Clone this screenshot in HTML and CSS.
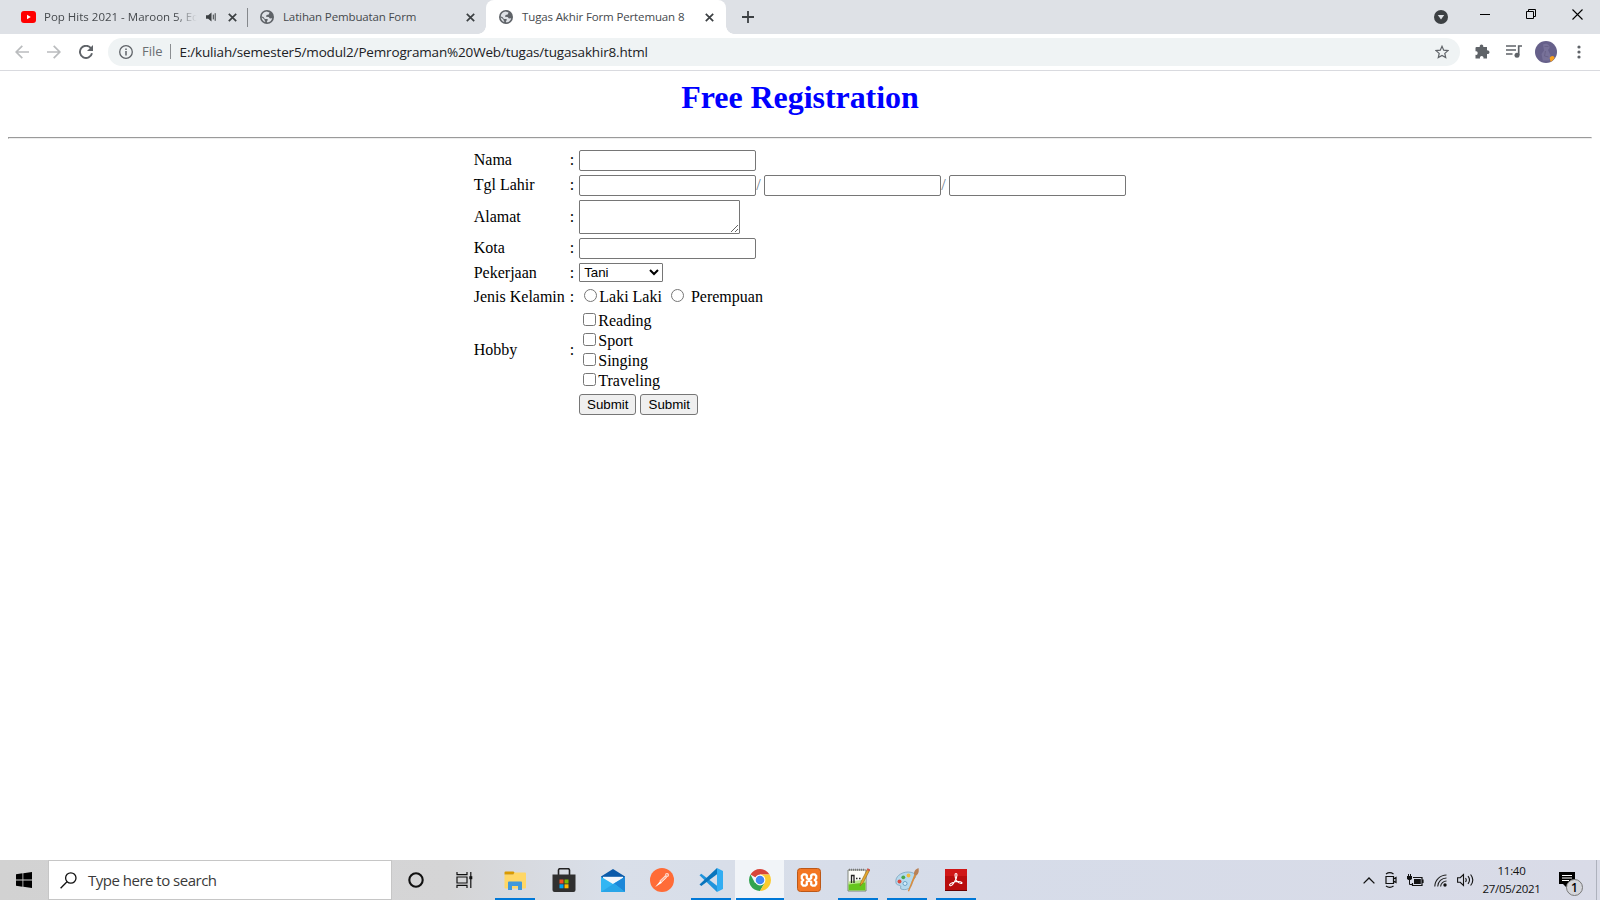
FILE: index.html
```html
<!DOCTYPE html>
<html lang="id">
<head>
<meta charset="utf-8">
<title>Tugas Akhir Form Pertemuan 8</title>
<link rel="stylesheet" href="styles.css">
</head>
<body>
<svg class="defs" width="0" height="0">
  <symbol id="globe" viewBox="0 0 14 14"><circle cx="7" cy="7" r="7" fill="#5f6368"/><path d="M6.6 1.6 9.6 2.6 8.7 4.4 6.6 4.9 6 6.7 8.7 6.9 9.9 8.6 12.2 8.3C11.8 10.6 9.8 12.4 7.4 12.4L6.8 11 8.1 9.9 7.2 9 4.9 8.9 3.4 6.9 1.7 6.5C1.9 4 4 1.8 6.6 1.6Z" fill="#dee1e6"/><path d="M1.6 7.2 4.2 9.2 5.4 12.1C3.2 11.5 1.7 9.6 1.6 7.2Z" fill="#dee1e6"/></symbol>
  <symbol id="close" viewBox="0 0 9 9"><path d="M.8.8 8.2 8.2M8.2.8.8 8.2" stroke="#3c4043" stroke-width="1.7"/></symbol>
</svg>
<header class="tabs">
  <div class="tab tab-one">
    <svg width="15" height="12" viewBox="0 0 15 12"><rect width="15" height="12" rx="3" fill="#f00"/><path d="M6 3.7v4.6L9.8 6Z" fill="#fff"/></svg>
    <span class="tab-title fade">Pop Hits 2021 - Maroon 5, Ed</span>
    <svg class="audio" width="11" height="10" viewBox="0 0 11 10"><path d="M0 3.3h2.2L5.5.6v8.8L2.2 6.7H0Z" fill="#3c4043"/><path d="M7.3 2.6v4.8M9.2 1.2v7.6" stroke="#3c4043" stroke-width="1"/></svg>
    <svg class="x" width="9" height="9"><use href="#close"/></svg>
  </div>
  <div class="tab tab-two">
    <svg width="14" height="14"><use href="#globe"/></svg>
    <span class="tab-title">Latihan Pembuatan Form</span>
    <svg class="x" width="9" height="9"><use href="#close"/></svg>
  </div>
  <div class="tab tab-active">
    <svg width="14" height="14"><use href="#globe"/></svg>
    <span class="tab-title">Tugas Akhir Form Pertemuan 8</span>
    <svg class="x" width="9" height="9"><use href="#close"/></svg>
  </div>
  <svg class="plus" width="12" height="12" viewBox="0 0 12 12"><path d="M6 0v12M0 6h12" stroke="#3c4043" stroke-width="1.8"/></svg>
  <div class="window-buttons">
    <svg width="14" height="14" viewBox="0 0 14 14"><circle cx="7" cy="7" r="7" fill="#3c4043"/><path d="M3.8 5h6.4L7 9.4Z" fill="#dee1e6"/></svg>
    <svg width="10" height="10" viewBox="0 0 10 10"><path d="M0 5.5h10" stroke="#000"/></svg>
    <svg width="10" height="10" viewBox="0 0 10 10" fill="none" stroke="#000"><path d="M.5 2.5h7v7h-7ZM2.5 2.5v-2h7v7h-2"/></svg>
    <svg width="11" height="11" viewBox="0 0 11 11"><path d="M.5.5l10 10M10.5.5l-10 10" stroke="#000" stroke-width="1.1"/></svg>
  </div>
</header>
<nav class="toolbar">
  <svg width="14" height="14" viewBox="0 0 14 14" fill="none" stroke="#babcbe" stroke-width="1.7"><path d="M14 7H1.5M7.3.8 1.2 7l6.1 6.2"/></svg>
  <svg width="14" height="14" viewBox="0 0 14 14" fill="none" stroke="#babcbe" stroke-width="1.7"><path d="M0 7h12.5M6.7.8 12.8 7l-6.1 6.2"/></svg>
  <svg width="14" height="14" viewBox="0 0 14 14"><path d="M12 3.3A6.1 6.1 0 1 0 13 8.3" fill="none" stroke="#5f6368" stroke-width="1.9"/><path d="M14 0v6H8Z" fill="#5f6368"/></svg>
  <div class="address">
    <svg width="14" height="14" viewBox="0 0 14 14"><circle cx="7" cy="7" r="6.3" fill="none" stroke="#5f6368" stroke-width="1.3"/><path d="M7 6v4.5M7 3.4v1.5" stroke="#5f6368" stroke-width="1.5"/></svg>
    <span class="scheme">File</span>
    <span class="url">E:/kuliah/semester5/modul2/Pemrograman%20Web/tugas/tugasakhir8.html</span>
    <svg class="star" width="14" height="14" viewBox="0 0 14 14"><path d="m7 1.3 1.7 3.9 4.3.4-3.2 2.8.9 4.2L7 10.4l-3.7 2.2.9-4.2L1 5.6l4.3-.4Z" fill="none" stroke="#5f6368" stroke-width="1.2"/></svg>
  </div>
  <svg class="puzzle" width="15" height="15" viewBox="0 0 15 15"><path d="M1.5 3H4.8a1.8 1.8 0 1 1 3.4 0H12V6.4a1.9 1.9 0 1 1 0 3.6v4.5H8.4a1.8 1.8 0 1 0-3.4 0H.5V10.8a1.8 1.8 0 1 0 0-3.5V4a1 1 0 0 1 1-1Z" fill="#5f6368"/></svg>
  <svg class="queue" width="16" height="13" viewBox="0 0 16 13"><path d="M0 1h10M0 5h10M0 9h6.5M12.7 10V1H16" fill="none" stroke="#5f6368" stroke-width="1.7"/><circle cx="11" cy="10.3" r="2.5" fill="#5f6368"/></svg>
  <svg class="avatar" width="22" height="22" viewBox="0 0 22 22"><circle cx="11" cy="11" r="11" fill="#66608a"/><path d="M8 3.5c3-2 7 0 6.6 3.5L13 9l2.5 5-1 5.5H7.8L6.5 13 9 9.5Z" fill="#777199"/><path d="M9.500 5.500h4M10.500 10l-1 5 4 1" fill="none" stroke="#696288"/><path d="M15 18.500a2.500 2.500 0 0 1 4.700-1.800 11 11 0 0 1-4 4.200Z" fill="#f9a01b"/></svg>
  <svg class="menu" width="4" height="14" viewBox="0 0 4 14" fill="#5f6368"><circle cx="2" cy="2" r="1.6"/><circle cx="2" cy="7" r="1.6"/><circle cx="2" cy="12" r="1.6"/></svg>
</nav>
<main class="page">
  <h1>Free Registration</h1>
  <hr>
  <form>
  <table>
    <tr class="raised"><td>Nama</td><td>:</td><td class="fields"><input class="text" type="text"></td></tr>
    <tr class="raised"><td>Tgl Lahir</td><td>:</td><td class="fields"><input class="text" type="text"><i>/</i><input class="text" type="text"><i>/</i><input class="text" type="text"></td></tr>
    <tr><td>Alamat</td><td>:</td><td class="fields"><textarea></textarea></td></tr>
    <tr class="raised"><td>Kota</td><td>:</td><td class="fields"><input class="text" type="text"></td></tr>
    <tr><td>Pekerjaan</td><td>:</td><td class="fields"><select><option>Tani</option></select></td></tr>
    <tr class="lowered"><td>Jenis Kelamin</td><td>:</td><td class="choices"><div><input type="radio" name="jk">Laki Laki <input type="radio" name="jk"> Perempuan</div></td></tr>
    <tr><td>Hobby</td><td>:</td><td class="choices"><div><input type="checkbox">Reading</div><div><input type="checkbox">Sport</div><div><input type="checkbox">Singing</div><div><input type="checkbox">Traveling</div></td></tr>
    <tr><td></td><td></td><td class="fields buttons"><button type="button">Submit</button><button type="button">Submit</button></td></tr>
  </table>
  </form>
</main>
<footer class="taskbar">
  <div class="start"><svg width="16" height="16" viewBox="0 0 16 16"><path d="M0 2.2 6.5 1.3V7.6H0ZM7.3 1.2 16 0V7.6H7.3ZM0 8.4H6.5v6.3L0 13.8ZM7.3 8.4H16V16L7.3 14.8Z"/></svg></div>
  <div class="search">
    <svg width="17" height="17" viewBox="0 0 17 17" fill="none" stroke="#111" stroke-width="1.3"><circle cx="10.8" cy="6" r="5.2"/><path d="M7 9.8.6 16.2"/></svg>
    <span>Type here to search</span>
  </div>
  <div class="apps">
    <div class="app cortana"><svg width="16" height="16" viewBox="0 0 16 16"><circle cx="8" cy="8" r="6.7" fill="none" stroke="#111" stroke-width="2.1"/></svg></div>
    <div class="app taskview"><svg width="17" height="16" viewBox="0 0 17 16" fill="none" stroke="#111" stroke-width="1.2"><path d="M1 0v2.7h10V0M1 16v-2.7h10V16M1 5h10v6H1ZM14.8 0v16"/><path d="M13.3 4.2h3v3h-3Z" fill="#111" stroke="none"/></svg></div>
    <div class="app run"><svg width="22" height="19" viewBox="0 0 22 19"><path d="M.5 3.500V16.500a1 1 0 0 0 1 1H21a1 1 0 0 0 1-1V2.500a1 1 0 0 0-1-1H10.500L9 3.500Z" fill="#ffd766"/><path d="M.5 1.500A1 1 0 0 1 1.500.5H9.500L10.500 1.500 9.300 3.500H.5Z" fill="#d99a00"/><path d="M4 19v-7.600a1 1 0 0 1 1-1H17a1 1 0 0 1 1 1V19h-4v-4H8v4Z" fill="#3f98dc"/></svg></div>
    <div class="app"><svg width="24" height="24" viewBox="0 0 24 24"><path d="M6.5 7V2a1.5 1.5 0 0 1 1.500-1.300h8A1.500 1.500 0 0 1 17.500 2v5" fill="none" stroke="#222" stroke-width="1.6"/><path d="M.5 6.500h23V22a2 2 0 0 1-2 2h-19a2 2 0 0 1-2-2Z" fill="#303030"/><path d="M7.500 11.500h4v4h-4Z" fill="#f25022"/><path d="M12.500 11.500h4v4h-4Z" fill="#7fba00"/><path d="M7.500 16.300h4v4h-4Z" fill="#00a4ef"/><path d="M12.500 16.300h4v4h-4Z" fill="#ffb900"/></svg></div>
    <div class="app"><svg width="24" height="23" viewBox="0 0 24 23"><path d="M0 7.600 12 0l12 7.600V12H0Z" fill="#0b5aa9"/><path d="M2 7.800h20v8H2Z" fill="#f4f7fb"/><path d="M0 7.700 12 15 24 7.700V23H0Z" fill="#32b6f3"/><path d="M24 7.700V23L13 14.400Z" fill="#1d87d8"/><path d="M0 23h24L13 14.400Z" fill="#28a5e8"/></svg></div>
    <div class="app"><svg width="24" height="24" viewBox="0 0 24 24"><circle cx="12" cy="12" r="12" fill="#ff6c37"/><path d="M5.200 19 10 13.200l2 1.600Z" fill="#fff"/><path d="m9.800 12.900 5.200-5 1.600 1.700-5.200 4.800Z" fill="#ffb89a" stroke="#fff" stroke-width=".7"/><circle cx="17" cy="6.900" r="2" fill="#ffe1d4"/><path d="m15.900 6.800 2 .3" stroke="#ff6c37"/></svg></div>
    <div class="app run"><svg width="24" height="24" viewBox="0 0 24 24"><path d="m.5 7.200 1.800-1.400L18 17.800V24Z" fill="#2094dc"/><path d="m.5 16.600 1.800 1.500L18 6.200V0Z" fill="#0875bd"/><path d="M18 0v24l6-3V3Z" fill="#32adf2"/></svg></div>
    <div class="app run current"><svg width="22" height="22" viewBox="0 0 22 22"><path d="M11 11 1.500 5.500A11 11 0 0 1 20.500 5.500H11Z" fill="#d8453b"/><path d="M11 11 6 14 1.500 5.500A11 11 0 0 0 11 22l4.800-8.300Z" fill="#32a350"/><path d="M11 5.500h9.500A11 11 0 0 1 11 22l4.800-8.300Z" fill="#fccb2e"/><circle cx="11" cy="11" r="5.400" fill="#fff"/><circle cx="11" cy="11" r="4.300" fill="#4286f4"/></svg></div>
    <div class="app"><svg width="24" height="24" viewBox="0 0 24 24"><rect x=".5" y=".5" width="23" height="23" rx="3" fill="#f37623" stroke="#bc5817"/><path d="M9.800 10.300V7.300L8.500 6.300H6.300L4.800 8V10.500L6.300 12 4.800 13.500V16L6.300 17.700H8.500L9.800 16.700V13.700L12 12.500 14.200 13.700V16.700L15.500 17.700H17.700L19.200 16V13.500L17.700 12 19.200 10.500V8L17.700 6.300H15.500L14.200 7.300V10.300L12 11.500Z" fill="none" stroke="#fff" stroke-width="2.300" stroke-linejoin="round"/></svg></div>
    <div class="app run"><svg width="24" height="24" viewBox="0 0 24 24"><path d="M2 2h18v21H2Z" fill="#fbfcf8" stroke="#68705f" stroke-width=".8"/><path d="M2.500 15.500c6-1.500 11-1 17-2v9h-17Z" fill="#65c61e"/><path d="M2.500 13.500c6-1 11-1 17-2v3l-17 2Z" fill="#b8e58c"/><path d="M3 1.800h16" stroke="#777" stroke-width="2" stroke-dasharray="1 1"/><path d="M5.500 15V7.500h2.500V15M10 10.500h1.500M13 10.500h1.500" fill="none" stroke="#222" stroke-width="1.300"/><path d="m14 18 1-4.200L21.600.8l2.200 1.100L17 15Z" fill="#e5a92c" stroke="#8b6325" stroke-width=".6"/><path d="m20.900 2.100.8-1.600 2.300 1-.8 1.700Z" fill="#d85050"/></svg></div>
    <div class="app run"><svg width="24" height="24" viewBox="0 0 24 24"><path d="M1 15C-.5 9 6 4 13 4c6 0 9 3 7 6-2 2-3 2-3 5 0 5-6 8-11 6-1.500-1 1-3-1-3.500C3.500 17 1.500 17 1 15Z" fill="#b5d9ed" stroke="#719cb8" stroke-width=".7"/><circle cx="4.500" cy="13.500" r="2" fill="#d94b40"/><circle cx="8.300" cy="9.300" r="1.900" fill="#48a84b"/><circle cx="13.500" cy="7.500" r="1.900" fill="#f2bc3d"/><circle cx="10" cy="15.500" r="2" fill="#d5edfa" stroke="#5995bd" stroke-width=".8"/><path d="m12.800 23 6.700-17 1.800 1L14 23.500Z" fill="#d98d40"/><path d="M19 6.500C18.500 3 21 1 23.500 0c.5 3 .5 5-2 7.500Z" fill="#b98156"/></svg></div>
    <div class="app run"><svg width="22" height="22" viewBox="0 0 22 22"><path d="M0 0h22v21H0Z" fill="#b90d0d"/><path d="M0 0h22v7H0Z" fill="#d01717"/><path d="M0 21h22v1H0Z" fill="#600"/><path d="M5 16.500c-2-1.500 4-4 8-4 4 0 5 2 3 2-3.500 0-6-4.500-6-8.500 0-2 2-2 2 0 0 4-5 12-7 10.500Z" fill="none" stroke="#fff" stroke-width="1.100"/></svg></div>
  </div>
  <div class="tray">
    <svg width="12" height="7" viewBox="0 0 12 7"><path d="m.6 6.400 5.400-5.400 5.400 5.400" fill="none" stroke="#111" stroke-width="1.300"/></svg>
    <svg width="12" height="16" viewBox="0 0 12 16" fill="none" stroke="#111" stroke-width="1.200"><path d="M1 2Q4.700-.6 8.500 2M1 14q3.700 2.600 7.500 0M1 4.500h7.500v7H1ZM8.500 7l2.500-1.500v5L8.500 9"/></svg>
    <svg width="17" height="13" viewBox="0 0 17 13"><path d="M6 3.500h9v8H5.500V9M15.500 6H16v3" fill="none" stroke="#111" stroke-width="1.200"/><path d="M7 5h6.800v5H7ZM0 2h5v3L3.500 6h-2L0 5Z" fill="#111"/><path d="M1.500 0v2M3.500 0v2M2.500 6v4.500h3" fill="none" stroke="#111"/></svg>
    <svg width="13" height="13" viewBox="0 0 13 13" fill="none" stroke="#222" stroke-width="1.100"><path d="M.8 12.500A11.700 11.700 0 0 1 12.500 1M3.700 12.500a8.800 8.800 0 0 1 8.800-8.500M6.600 12.500A5.900 5.900 0 0 1 12.500 7"/><circle cx="11" cy="11" r="1.700" fill="#111" stroke="none"/></svg>
    <svg width="17" height="14" viewBox="0 0 17 14" fill="none" stroke="#111" stroke-width="1.100"><path d="M.6 4.700h2.600L6.500 1.500v11L3.200 9.300H.6ZM8.500 5q1.500 2 0 4M11 3.200q3 3.800 0 7.600M13.600 1.500q4.400 5.500 0 11"/></svg>
  </div>
  <div class="clock"><span>11:40</span><span>27/05/2021</span></div>
  <div class="notice"><svg width="16" height="16" viewBox="0 0 16 16"><path d="M0 0h16v12H8v4l-4-4H0Z"/><path d="M3 3.500h10M3 6h10M3 8.500h7" stroke="#fff"/></svg><b>1</b></div>
</footer>
</body>
</html>
```
FILE: styles.css
```css
* { box-sizing: border-box; }
body { margin: 0; width: 1600px; height: 900px; overflow: hidden; display: flex; flex-direction: column; background: #fff; font-family: "Liberation Serif", serif; }
svg { display: block; flex: none; }
.defs { position: absolute; }

.tabs { height: 34px; flex: none; display: flex; align-items: center; background: #dee1e6; font: 12px "Open Sans", sans-serif; color: #45494d; }
.tab { display: flex; align-items: center; height: 34px; white-space: nowrap; }
.tab-one { width: 248px; padding-left: 21px; border-right: 1px solid transparent; background: linear-gradient(#85888c, #85888c) 247px 8px / 1px 19px no-repeat border-box; }
.tab-two { width: 238px; padding-left: 12px; }
.tab-active { position: relative; width: 240px; padding-left: 13px; background: #fff; border-radius: 8px 8px 0 0; }
.tab-active::before, .tab-active::after { content: ""; position: absolute; bottom: 0; width: 8px; height: 8px; }
.tab-active::before { left: -8px; background: radial-gradient(circle at 0 0, #dee1e6 7.5px, #fff 8px); }
.tab-active::after { right: -8px; background: radial-gradient(circle at 100% 0, #dee1e6 7.5px, #fff 8px); }
.tab-title { margin-left: 9px; flex: 1; font-size: 11.5px; letter-spacing: -.13px; padding-bottom: 2px; }
.tab-one .tab-title { margin-left: 8px; flex: none; width: 153px; letter-spacing: 0; }
.fade { -webkit-mask-image: linear-gradient(90deg, #000 132px, transparent 153px); mask-image: linear-gradient(90deg, #000 132px, transparent 153px); }
.audio { margin-left: 9px; }
.tab .x { margin-left: auto; margin-right: 10px; }
.tab-two .x { margin-right: 11px; }
.tab-active .x { margin-right: 12px; }
.plus { margin-left: 16px; }
.window-buttons { margin-left: auto; height: 34px; display: flex; padding: 10px 17px 0 0; }
.window-buttons svg:nth-child(2) { margin: -1px 0 0 32px; }
.window-buttons svg:nth-child(3) { margin: -1px 0 0 36px; }
.window-buttons svg:nth-child(4) { margin: -1px 0 0 36px; }

.toolbar { height: 37px; flex: none; display: flex; align-items: center; padding: 0 19px 1px 15px; border-bottom: 1px solid #d9dadf; gap: 18px; font: 13px "Open Sans", sans-serif; }
.address { display: flex; align-items: center; width: 1352px; height: 28px; margin-left: -3px; padding: 0 11px; border-radius: 14px; background: #eff3f4; }
.scheme { margin-left: 9px; padding-right: 7px; line-height: 15px; border-right: 1px solid #8b8e91; color: #6a6e72; }
.url { margin-left: 9px; font-size: 13.5px; letter-spacing: -.165px; color: #202124; }
.star { margin-left: auto; }
.puzzle { margin-left: -3px; }
.queue { margin-left: -2px; }
.avatar { margin-left: -5px; }
.menu { margin-left: 2px; }

.page { flex: 1; padding: 8px; font-size: 16px; color: #000; }
h1 { margin: 0 0 21px; font-size: 32px; line-height: 37px; letter-spacing: -.06px; text-align: center; color: #00f; }
hr { margin: 0 0 8px; border: 1px solid; border-color: #9a9a9a #eee #eee #9a9a9a; }
table { margin: 0 auto; border-spacing: 2px; }
td { padding: 1px; line-height: 18px; vertical-align: middle; white-space: nowrap; }
td:first-child, td:nth-child(2) { padding-right: 2px; }
.raised td:not(.fields) { padding-top: 0; padding-bottom: 2px; }
.lowered td:not(.choices) { padding-top: 2px; padding-bottom: 0; }
.fields > * { vertical-align: top; }
.fields { font-size: 0; }
.fields i { display: inline-block; width: 8px; font-size: 16px; font-style: normal; line-height: 19px; color: #6c7b8c; }
.text { width: 177px; height: 21px; margin: 0; border: 1px solid #767676; border-radius: 2px; }
textarea { display: block; width: 161px; height: 34px; margin: 0; border: 1px solid #767676; border-radius: 1px; }
select { display: block; width: 84px; height: 19px; margin: 0; padding: 0; border: 1px solid #767676; border-radius: 1px; background: #fff; font: 13.333px "Liberation Sans", sans-serif; letter-spacing: -.1px; color: #000; }
.choices div { height: 20px; line-height: 22px; }
.choices input { width: 13px; height: 13px; vertical-align: top; margin: 3px 2px 0 4px; }
.choices input[type="radio"] { margin-left: 5px; }
.choices input + input { margin-right: 3px; }
button { width: 57px; height: 21px; padding: 0; border: 1px solid #767676; border-radius: 3px; background: #efefef; font: 13.333px "Liberation Sans", sans-serif; color: #000; }
button + button { width: 58px; margin-left: 4px; }

.taskbar { height: 40px; flex: none; display: flex; background: linear-gradient(90deg, #d2d2d2, #d5d5d6 28%, #d9dfe9 38%, #d6dce9 60%, #d9dbe7); font-family: "Open Sans", sans-serif; }
.start { width: 48px; display: flex; padding: 12px 0 0 16px; }
.search { width: 344px; display: flex; align-items: center; padding-left: 11px; gap: 11px; border: 1px solid #c6c6c6; background: #fff; font-size: 15px; letter-spacing: -.5px; color: #3a3a3a; }
.apps { display: flex; }
.app { width: 49px; display: flex; align-items: center; justify-content: center; }
.cortana { width: 48px; }
.taskview { width: 50px; padding-right: 1px; }
.run { background: linear-gradient(#0078d7, #0078d7) center bottom / 40px 2px no-repeat; }
.current { background: linear-gradient(#0078d7, #0078d7) center bottom / 48px 2px no-repeat, #f1f4f8 content-box; }
.tray { margin-left: auto; display: flex; align-items: center; gap: 10px; }
.clock { width: 59px; margin-left: 8px; display: flex; flex-direction: column; align-items: center; padding-top: 2px; font-size: 11.5px; line-height: 18px; letter-spacing: -.3px; white-space: nowrap; color: #111; }
.notice { position: relative; width: 56px; padding: 12px 0 0 18px; border-right: 1px solid #aeb2bd; margin-right: 3px; }
.notice b { position: absolute; left: 25px; top: 19px; width: 17px; height: 17px; border: 1px solid #777; border-radius: 50%; background: #d4d5da; font-size: 12px; line-height: 15px; text-align: center; font-weight: 600; }
```
